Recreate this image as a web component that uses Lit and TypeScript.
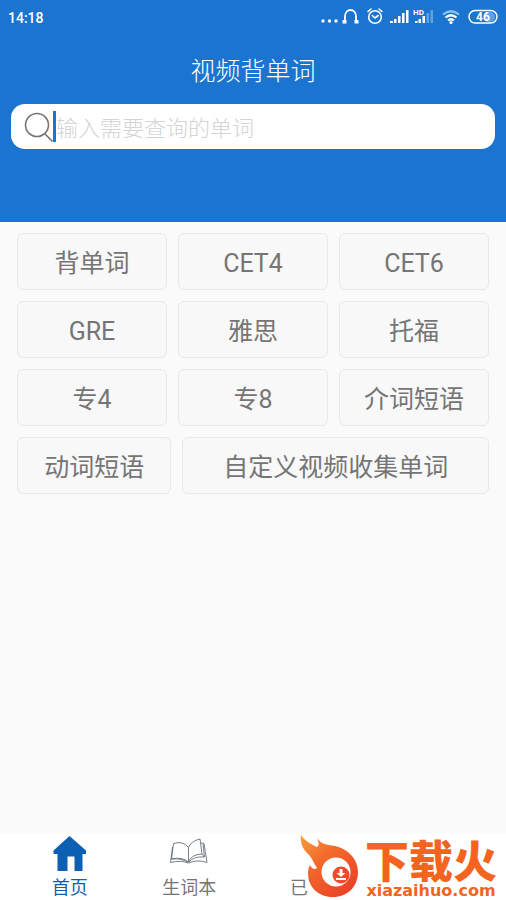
import { LitElement, html, css, svg } from "lit";
import { customElement } from "lit/decorators.js";

const statusIcons = html`
  <svg class="status-icons" viewBox="320 6 180 24" role="img" aria-label="手机状态">
    ${svg`
    <g fill="#fff">
      <circle cx="323" cy="21" r="1.700"/><circle cx="329.500" cy="21" r="1.700"/><circle cx="336" cy="21" r="1.700"/>
      <path d="M342.500 20h4v3.500h-4zM354.500 20h4v3.500h-4z"/>
    </g>
    <path d="M345 22v-6a5.500 6 0 0 1 11 0v6" fill="none" stroke="#fff" stroke-width="1.800"/>
    <g fill="none" stroke="#fff" stroke-width="1.600" stroke-linecap="round">
      <circle cx="375" cy="17" r="6.300"/>
      <path d="M368 11.500l3-2.500M382 11.500l-3-2.500M372.300 15.500l2.700 2.500 3.200-2.500"/>
    </g>
    <path d="M390 23v-2h3v2zM394 23v-4h2.500v4zM398 23v-7h2.500v7zM402 23v-10h2.500v10zM406 23v-13h2.500v13zM415 23v-2h2.500v2zM418.500 23v-4h2.500v4zM422.500 23v-7h2.500v7z" fill="#fff"/>
    <path d="M426.500 23v-10h2.500v10zM430.500 23v-13h2.500v13z" fill="#5fa3e3"/>
    <text x="413" y="15" fill="#fff" font-size="8" font-weight="700" font-family="Roboto, sans-serif">HD</text>
    <g fill="none" stroke="#fff" stroke-width="2.200">
      <path d="M443 14.500q8-6.500 16 0" stroke="#8fc0ee"/>
      <path d="M445.500 17.500q5.500-4.500 11 0"/>
      <path d="M448 20.500q3-2.500 6 0"/>
    </g>
    <circle cx="451" cy="22.500" r="1.600" fill="#fff"/>
    <rect x="483" y="12" width="12" height="10" rx="5" fill="#5fa3e3"/>
    <rect x="469" y="10.500" width="28" height="12.500" rx="6.200" fill="none" stroke="#fff" stroke-width="1.500"/>
    <text x="483" y="21" fill="#fff" text-anchor="middle" font-size="12" font-weight="700" font-family="Roboto, sans-serif">46</text>
    `}
  </svg>`;

const homeIcon = html`
  <svg class="tab-icon" viewBox="0 0 40 36" aria-hidden="true">
    <path d="M19.500 0L36 14.500V18H32.500V35H24.500V20.500H17.500V35H7.500V18H3.500V14.500Z" fill="#0d5fb3"/>
  </svg>`;

const bookIcon = html`
  <svg class="tab-icon" viewBox="0 0 40 36" aria-hidden="true">
    <g fill="none" stroke="#66707a" stroke-width="0.900" stroke-linejoin="round">
      <path d="M19.500 11.500Q14 4.500 4.500 7.500L2.500 23Q13 20.500 19.500 26Q22 18.500 33 18L31 3Q22 5 19.500 11.500V26"/>
      <path d="M3.500 11L1.500 26.500Q12 24 19.500 27Q28 23 38 26.500L35 7.500L32 7M33 18L35.500 21Q25 20 20 26M35.500 21L34 8M2.500 23Q13 22 19 26.500"/>
    </g>
  </svg>`;

const flameLogo = html`
  <svg class="flame" viewBox="0 0 62 64" aria-hidden="true">
    <defs>
      <linearGradient id="fire" x1="0" y1="0" x2="0.700" y2="1">
        <stop offset="0" stop-color="#f9a13a"/>
        <stop offset="0.400" stop-color="#f36c2c"/>
        <stop offset="1" stop-color="#ea4326"/>
      </linearGradient>
    </defs>
    <path d="M1 0C6 7 11 9 17 12C20 10 18 6 17 3C21 9 27 10 35 11C49 14 58 25 58 37C58 52 47 62 33 62C18 62 8 52 8 38C8 34 9 32 10 30C12 34 15 35 17 33C13 27 12 22 7 18C2 13 0 7 1 0Z" fill="url(#fire)"/>
    <circle cx="36" cy="37" r="14.500" fill="#fff"/>
    <circle cx="41" cy="40" r="8.500" fill="#ee4b2b"/>
    <path d="M39.500 34h3v4h3l-4.500 4-4.500-4h3zM36 43h10v2h-10z" fill="#fff"/>
  </svg>`;

@customElement("app-root")
export class AppRoot extends LitElement {
  static styles = css`
    :host {
      display: flex;
      flex-direction: column;
      min-height: 100vh;
      background: #fafafa;
      font-family: Roboto, "Noto Sans CJK SC", sans-serif;
      color: #757575;
    }
    * { box-sizing: border-box; }
    button, input { font: inherit; color: inherit; margin: 0; }
    header {
      background: #1b75d0;
      color: #fff;
      padding-bottom: 73px;
    }
    .status {
      display: flex;
      justify-content: space-between;
      align-items: center;
      height: 36px;
      padding: 0 6px 0 8px;
    }
    .time { font-size: 14px; font-weight: 500; line-height: 34px; }
    .status-icons { width: 180px; height: 24px; }
    h1 {
      margin: 0;
      padding: 18px 0 14px;
      font-size: 25px;
      font-weight: 300;
      line-height: 36px;
      text-align: center;
    }
    .search {
      display: flex;
      align-items: center;
      height: 45px;
      margin: 0 11px;
      padding-left: 13px;
      border-radius: 14px;
      background: #fff;
    }
    .lens { flex: none; width: 29px; height: 32px; }
    .caret { flex: none; width: 3px; height: 31px; background: #1b75d0; }
    input {
      flex: 1;
      min-width: 0;
      height: 40px;
      padding: 4px 0 0;
      border: 0;
      outline: 0;
      background: none;
      font-size: 22px;
      font-weight: 300;
      color: #757575;
    }
    input::placeholder { color: #d4d4d4; opacity: 1; }
    main {
      flex: 1;
      display: flex;
      flex-direction: column;
      gap: 11px;
      padding: 11px 17px;
    }
    .row { display: flex; gap: 11px; }
    .card {
      flex: 1 1 0;
      min-width: 0;
      height: 57px;
      padding: 4px 0 0;
      border: 1px solid #e8e8e8;
      border-radius: 6px;
      background: #f8f8f8;
      font-size: 25px;
      line-height: 36px;
      white-space: nowrap;
    }
    .wide { flex-grow: 2; }
    nav {
      position: relative;
      display: flex;
      height: 67px;
      padding: 0 10px;
      background: #fff;
    }
    .tab {
      flex: none;
      width: 24.6%;
      display: flex;
      flex-direction: column;
      align-items: center;
      gap: 3px;
      padding: 3px 0 0;
      border: 0;
      background: none;
      font-size: 18px;
      line-height: 25px;
    }
    .tab-icon { flex: none; width: 40px; height: 36px; }
    .active { color: #0d5fb3; }
    .covered {
      align-items: flex-start;
      justify-content: flex-start;
      padding: 42px 0 0 41px;
    }
    .brand {
      position: absolute;
      right: 0;
      top: 2px;
      width: 206px;
      display: flex;
      color: #f4641e;
      text-decoration: none;
    }
    .flame { flex: none; width: 62px; height: 64px; }
    .brand-text {
      flex: none;
      display: flex;
      flex-direction: column;
      align-items: center;
      width: 138px;
    }
    .brand-name {
      font-family: "Noto Sans CJK SC", sans-serif;
      font-size: 44px;
      font-weight: 900;
      line-height: 48px;
      white-space: nowrap;
    }
    .brand-site {
      font-family: "DejaVu Sans", sans-serif;
      font-size: 16px;
      font-weight: 700;
      line-height: 16px;
    }
  `;

  private rows = [
    ["背单词", "CET4", "CET6"],
    ["GRE", "雅思", "托福"],
    ["专4", "专8", "介词短语"],
    ["动词短语", "自定义视频收集单词"],
  ];

  render() {
    return html`
      <header>
        <div class="status"><span class="time">14:18</span>${statusIcons}</div>
        <h1>视频背单词</h1>
        <label class="search">
          <svg class="lens" viewBox="0 0 29 32" aria-hidden="true">
            <g fill="none" stroke="#757575" stroke-width="1.600">
              <circle cx="13" cy="14" r="11.500"/><path d="M20.500 22.500l8 8"/>
            </g>
          </svg>
          <span class="caret"></span>
          <input type="text" placeholder="输入需要查询的单词" aria-label="查询单词" />
        </label>
      </header>
      <main>
        ${this.rows.map(
          (row) => html`<div class="row">
            ${row.map(
              (name, i) => html`<button class=${row.length === 2 && i === 1 ? "card wide" : "card"}>${name}</button>`
            )}
          </div>`
        )}
      </main>
      <nav>
        <button class="tab active">${homeIcon}<span>首页</span></button>
        <button class="tab">${bookIcon}<span>生词本</span></button>
        <button class="tab covered"><span>已</span></button>
        <a class="brand" href="#">
          ${flameLogo}
          <span class="brand-text">
            <span class="brand-name">下载火</span>
            <span class="brand-site">xiazaihuo.com</span>
          </span>
        </a>
      </nav>
    `;
  }
}
